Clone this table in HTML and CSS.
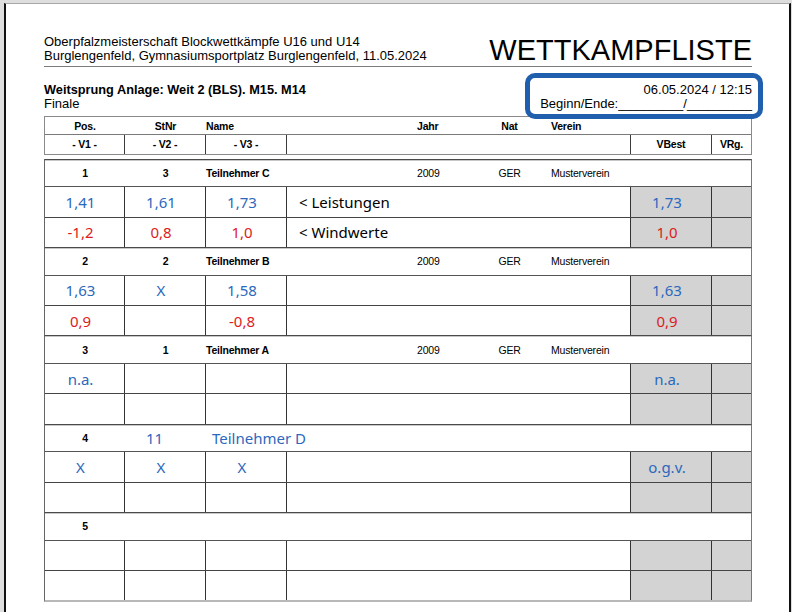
FILE: index.html
```html
<!DOCTYPE html>
<html lang="de">
<head>
<meta charset="utf-8">
<title>Wettkampfliste</title>
<link rel="stylesheet" href="styles.css">
</head>
<body>
<div class="page">
  <header class="doc-head">
    <div class="event">
      <div>Oberpfalzmeisterschaft Blockwettkämpfe U16 und U14</div>
      <div>Burglengenfeld, Gymnasiumsportplatz Burglengenfeld, 11.05.2024</div>
    </div>
    <h1 class="doc-title">WETTKAMPFLISTE</h1>
  </header>

  <section class="sub-head">
    <div class="disc">
      <div class="disc-name">Weitsprung Anlage: Weit 2 (BLS). M15. M14</div>
      <div>Finale</div>
    </div>
    <div class="timing">
      <div>06.05.2024 / 12:15</div>
      <div>Beginn/Ende:_________/_________</div>
    </div>
  </section>

  <div class="highlight"></div>

  <div class="thead">
    <div class="info hrow1">
      <div class="ctr">Pos.</div>
      <div class="ctr">StNr</div>
      <div>Name</div>
      <div>Jahr</div>
      <div class="ctr">Nat</div>
      <div>Verein</div>
    </div>
    <div class="grid hrow2">
      <div>- V1 -</div>
      <div>- V2 -</div>
      <div>- V3 -</div>
      <div></div>
      <div>VBest</div>
      <div>VRg.</div>
    </div>
  </div>

  <div class="blocks">
    <div class="block">
      <div class="info prow">
        <div class="ctr b">1</div>
        <div class="ctr b">3</div>
        <div class="b">Teilnehmer C</div>
        <div>2009</div>
        <div class="ctr">GER</div>
        <div>Musterverein</div>
      </div>
      <div class="grid perf">
        <div class="val blue">1,41</div>
        <div class="val blue">1,61</div>
        <div class="val blue">1,73</div>
        <div class="note">&lt; Leistungen</div>
        <div class="val blue best">1,73</div>
        <div class="best"></div>
      </div>
      <div class="grid wind">
        <div class="val red">-1,2</div>
        <div class="val red">0,8</div>
        <div class="val red">1,0</div>
        <div class="note">&lt; Windwerte</div>
        <div class="val red best">1,0</div>
        <div class="best"></div>
      </div>
    </div>

    <div class="block">
      <div class="info prow">
        <div class="ctr b">2</div>
        <div class="ctr b">2</div>
        <div class="b">Teilnehmer B</div>
        <div>2009</div>
        <div class="ctr">GER</div>
        <div>Musterverein</div>
      </div>
      <div class="grid perf">
        <div class="val blue">1,63</div>
        <div class="val blue">X</div>
        <div class="val blue">1,58</div>
        <div></div>
        <div class="val blue best">1,63</div>
        <div class="best"></div>
      </div>
      <div class="grid wind">
        <div class="val red">0,9</div>
        <div class="val red"></div>
        <div class="val red">-0,8</div>
        <div></div>
        <div class="val red best">0,9</div>
        <div class="best"></div>
      </div>
    </div>

    <div class="block">
      <div class="info prow">
        <div class="ctr b">3</div>
        <div class="ctr b">1</div>
        <div class="b">Teilnehmer A</div>
        <div>2009</div>
        <div class="ctr">GER</div>
        <div>Musterverein</div>
      </div>
      <div class="grid perf">
        <div class="val blue">n.a.</div>
        <div></div>
        <div></div>
        <div></div>
        <div class="val blue best">n.a.</div>
        <div class="best"></div>
      </div>
      <div class="grid wind">
        <div></div>
        <div></div>
        <div></div>
        <div></div>
        <div class="best"></div>
        <div class="best"></div>
      </div>
    </div>

    <div class="block">
      <div class="info prow">
        <div class="ctr b">4</div>
        <div class="entry-nr blue">11</div>
        <div class="entry-name blue">Teilnehmer D</div>
        <div></div>
        <div></div>
        <div></div>
      </div>
      <div class="grid perf">
        <div class="val blue">X</div>
        <div class="val blue">X</div>
        <div class="val blue">X</div>
        <div></div>
        <div class="val blue best">o.g.v.</div>
        <div class="best"></div>
      </div>
      <div class="grid wind">
        <div></div>
        <div></div>
        <div></div>
        <div></div>
        <div class="best"></div>
        <div class="best"></div>
      </div>
    </div>

    <div class="block last">
      <div class="info prow">
        <div class="ctr b">5</div>
        <div></div>
        <div></div>
        <div></div>
        <div></div>
        <div></div>
      </div>
      <div class="grid perf">
        <div></div>
        <div></div>
        <div></div>
        <div></div>
        <div class="best"></div>
        <div class="best"></div>
      </div>
      <div class="grid wind">
        <div></div>
        <div></div>
        <div></div>
        <div></div>
        <div class="best"></div>
        <div class="best"></div>
      </div>
    </div>
  </div>
</div>
</body>
</html>
```

FILE: styles.css
```css
* {
  box-sizing: border-box;
  margin: 0;
  padding: 0;
}

html, body {
  height: 100%;
}

body {
  background: #dedede;
  font-family: "Liberation Sans", Arial, sans-serif;
  color: #000;
  overflow: hidden;
}

.page {
  position: relative;
  margin: 3px 1px 0 4px;
  height: 609px;
  background: #fff;
  border-left: 2px solid #111;
  border-right: 2px solid #111;
  border-top: 1px solid #a8a8a8;
  padding: 31px 37px 0 38px;
}

/* document header */
.doc-head {
  display: flex;
  justify-content: space-between;
  align-items: flex-end;
  border-bottom: 1px solid #7c7c7c;
  padding-bottom: 3px;
}

.event {
  font-size: 13px;
  line-height: 14px;
}

.doc-title {
  font-size: 29px;
  font-weight: normal;
  line-height: 26px;
}

.sub-head {
  display: flex;
  justify-content: space-between;
  margin-top: 15.5px;
  font-size: 13px;
  line-height: 14.7px;
}

.disc-name {
  font-weight: bold;
  font-size: 12.75px;
}

.timing {
  text-align: right;
}

.highlight {
  position: absolute;
  left: 519px;
  top: 69px;
  width: 238px;
  height: 46px;
  border: 5px solid #1f5fae;
  border-radius: 10px;
}

/* table */
.thead {
  margin-top: 4px;
  border: 1px solid #8a8a8a;
  font-size: 10.5px;
  font-weight: bold;
  letter-spacing: -0.2px;
}

.info {
  display: grid;
  grid-template-columns: 80px 81px 211px 51px 83px 1fr;
  align-items: center;
  font-size: 10.5px;
  letter-spacing: -0.2px;
}

.grid {
  display: grid;
  grid-template-columns: 80px 81px 81px 344px 81px 1fr;
}

.ctr {
  text-align: center;
}

.b {
  font-weight: bold;
}

.hrow1 {
  height: 18.4px;
  border-bottom: 1px solid #7a7a7a;
}

.hrow2 {
  height: 18.4px;
  align-items: center;
  text-align: center;
}

.hrow2 > div {
  height: 100%;
  display: flex;
  align-items: center;
  justify-content: center;
}

.hrow2 > div:not(:last-child) {
  border-right: 1px solid #3c3c3c;
}

.blocks {
  margin-top: 4px;
}

.block {
  border-left: 1px solid #666;
  border-right: 1px solid #777;
  border-top: 1px solid #4a4a4a;
  box-shadow: inset 0 1px 0 #c8c8c8;
}

.block.last {
  border-bottom: 2px solid #b8b8b8;
}

.prow {
  height: 27.7px;
  border-bottom: 1px solid #555;
}

.perf {
  height: 30.3px;
  border-bottom: 1px solid #444;
}

.wind {
  height: 29.3px;
}

.perf > div,
.wind > div {
  display: flex;
  align-items: center;
}

.perf > div:not(:last-child),
.wind > div:not(:last-child) {
  border-right: 1px solid #333;
}

.best {
  background: #d3d3d3;
}

.val {
  justify-content: center;
  padding-right: 8px;
  font-family: "Noto Sans", "Open Sans", sans-serif;
  font-size: 15px;
}

.note {
  padding-left: 12px;
  font-family: "Noto Sans", "Open Sans", sans-serif;
  font-size: 15px;
}

.blue {
  color: #2c68bd;
}

.red {
  color: #dc1c1c;
}

.entry-nr {
  text-align: center;
  padding-right: 22px;
  font-family: "Noto Sans", "Open Sans", sans-serif;
  font-size: 15px;
  letter-spacing: 0;
}

.entry-name {
  padding-left: 6px;
  font-family: "Noto Sans", "Open Sans", sans-serif;
  font-size: 15px;
  letter-spacing: 0;
  white-space: nowrap;
}
```
